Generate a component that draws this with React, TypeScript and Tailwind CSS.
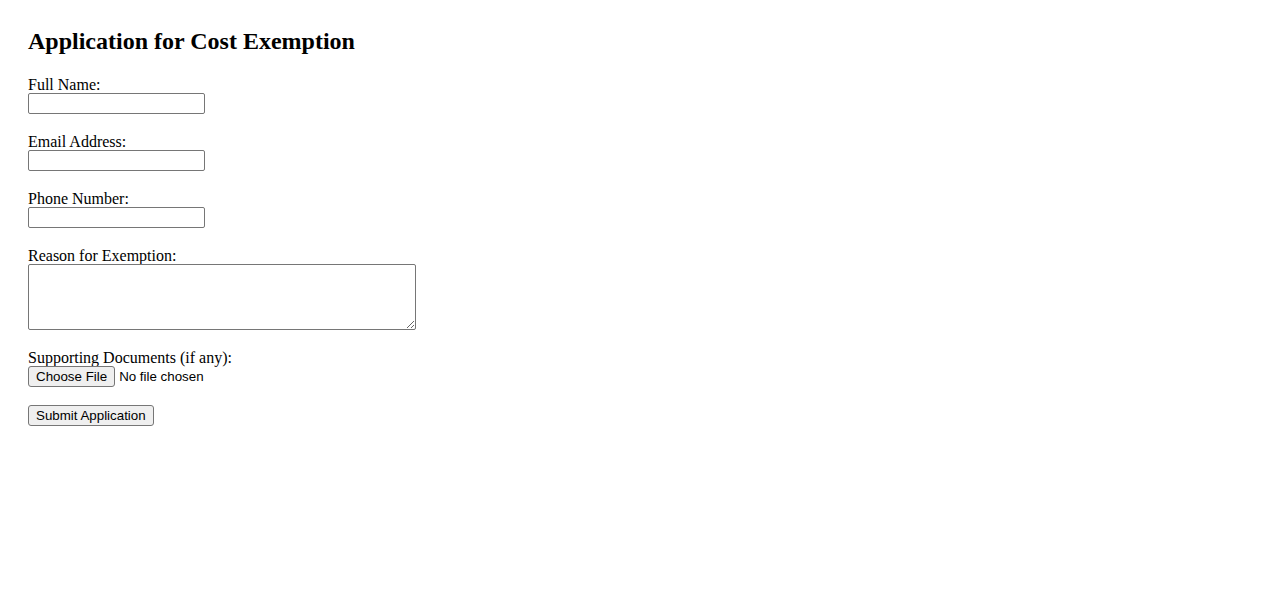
import React from "react";

export default function App() {
  const inputCls =
    "block w-[177px] h-[21px] border border-[#767676] rounded-[2px] bg-white px-[2px] text-[13.333px] font-['Liberation_Sans',Arial,sans-serif] outline-none";
  const labelCls = "block h-[18px] leading-[20px]";
  const btnCls =
    "h-[21px] px-[7px] border border-[#767676] rounded-[3px] bg-[#efefef] text-[13.333px] leading-[15px] text-black font-['Liberation_Sans',Arial,sans-serif]";
  return (
    <div className="min-h-[601px] bg-white text-black font-['Liberation_Serif','Times_New_Roman',serif] text-[16px] px-[28px] pt-[27px]">
      <h2 className="text-[24px] font-bold leading-[28px] mb-[20px]">Application for Cost Exemption</h2>
      <form onSubmit={(e) => e.preventDefault()} className="flex flex-col">
        <label className={labelCls}>Full Name:</label>
        <input type="text" className={inputCls} />
        <div className="h-[18px]" />
        <label className={labelCls}>Email Address:</label>
        <input type="email" className={inputCls} />
        <div className="h-[18px]" />
        <label className={labelCls}>Phone Number:</label>
        <input type="tel" className={inputCls} />
        <div className="h-[18px]" />
        <label className={labelCls}>Reason for Exemption:</label>
        <textarea className="block w-[388px] h-[66px] border border-[#767676] rounded-[2px] bg-white p-[2px] text-[13.333px] font-['Liberation_Mono',monospace] outline-none resize" />
        <div className="h-[18px]" />
        <label className={labelCls}>Supporting Documents (if any):</label>
        <div className="flex items-center h-[21px]">
          <button type="button" className={btnCls}>Choose File</button>
          <span className="ml-[4px] text-[13.333px] font-['Liberation_Sans',Arial,sans-serif]">No file chosen</span>
        </div>
        <div className="h-[18px]" />
        <div className="flex">
          <button type="submit" className={btnCls}>Submit Application</button>
        </div>
      </form>
    </div>
  );
}
